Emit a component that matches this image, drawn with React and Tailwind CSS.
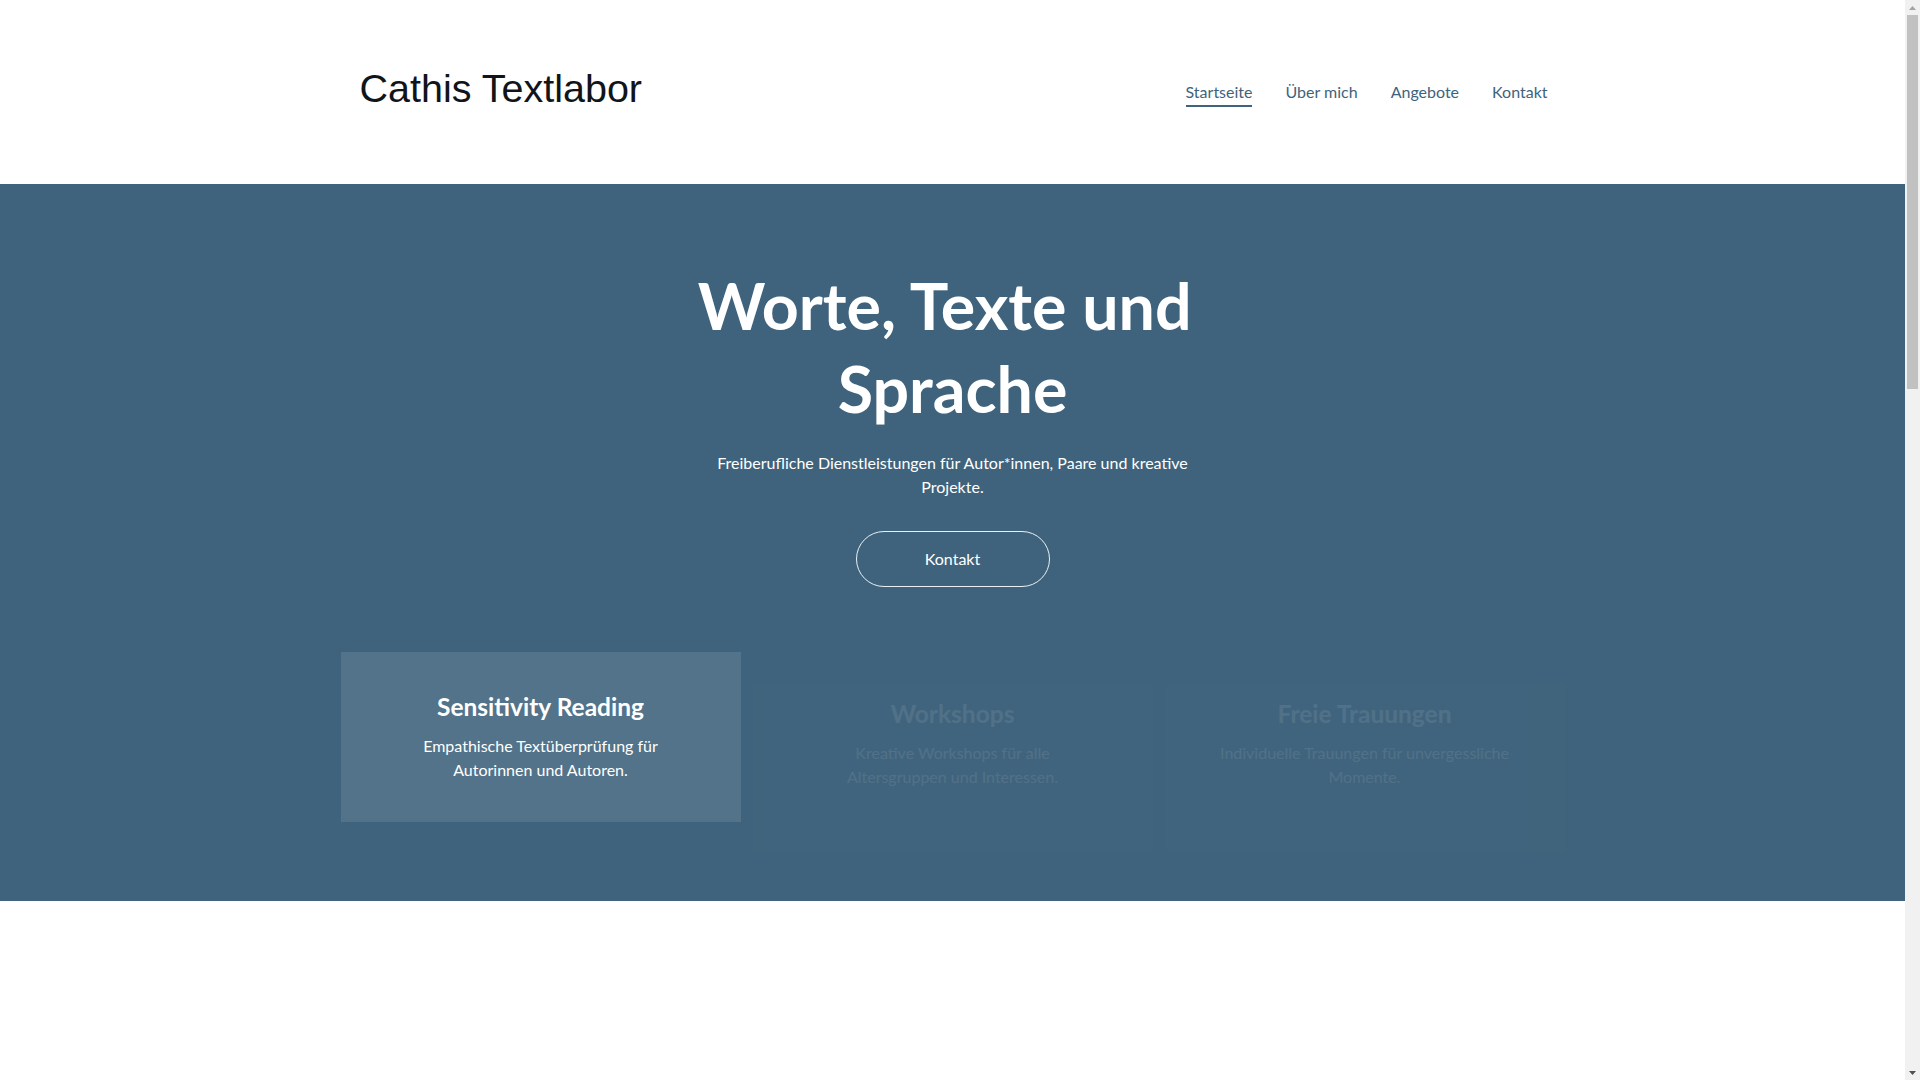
const NAV = ["Startseite", "Über mich", "Angebote", "Kontakt"];

const SERVICES = [
  {
    title: "Sensitivity Reading",
    text: "Empathische Textüberprüfung für Autorinnen und Autoren.",
    state: "shown",
  },
  {
    title: "Workshops",
    text: "Kreative Workshops für alle Altersgruppen und Interessen.",
    state: "entering",
  },
  {
    title: "Freie Trauungen",
    text: "Individuelle Trauungen für unvergessliche Momente.",
    state: "entering",
  },
];

export default function App() {
  return (
    <div className="flex h-screen overflow-hidden bg-white font-['Lato','Noto_Sans',sans-serif]">
      <main className="min-w-0 flex-1">
        <Header />
        <Hero />
        <section className="h-[600px] bg-white" />
      </main>
      <Scrollbar />
    </div>
  );
}

function Header() {
  return (
    <header className="h-[184px] bg-white">
      <div className="mx-auto flex max-w-[1190px] items-start justify-between pt-[66px]">
        <a className="pl-[2px] font-['Liberation_Sans','Arial',sans-serif] text-[39.5px] leading-[1.15] text-[#111418]">
          Cathis Textlabor
        </a>
        <nav className="mt-[14px] flex gap-[33px] text-[16px] leading-6 text-[#3f637c]">
          {NAV.map((item, i) => (
            <a
              key={item}
              className={`border-b-2 pb-[1px] ${i === 0 ? "border-[#3f637c]" : "border-transparent"}`}
            >
              {item}
            </a>
          ))}
        </nav>
      </div>
    </header>
  );
}

function Hero() {
  return (
    <section className="bg-[#3f637c] px-4 pt-20 pb-[79px] text-center text-white">
      <h1 className="mx-auto max-w-[600px] text-[64.5px] font-bold leading-[1.29]">
        Worte, Texte und{"\u00a0"}
        <br />
        Sprache
      </h1>
      <p className="mx-auto mt-[21px] max-w-[500px] text-[16px] leading-6">
        Freiberufliche Dienstleistungen für Autor*innen, Paare und kreative Projekte.
      </p>
      <button className="mt-[32px] h-[56px] w-[194px] rounded-full border border-white/90 text-[16px] text-white">
        Kontakt
      </button>
      <div className="mx-auto mt-[65px] grid max-w-[1224px] grid-cols-3 gap-3">
        {SERVICES.map((s) => (
          <ServiceCard key={s.title} {...s} />
        ))}
      </div>
    </section>
  );
}

function ServiceCard({ title, text, state }) {
  // cards two and three are caught mid fade-in
  const entering = state === "entering";
  return (
    <article
      className={`bg-white/10 px-[54px] pt-10 pb-10 ${entering ? "translate-y-[31px] opacity-[0.09]" : ""}`}
    >
      <div className={entering ? "-translate-y-[24px]" : ""}>
        <h3 className="text-[24.5px] font-bold leading-[1.2]">{title}</h3>
        <p className="mt-3 text-[16px] leading-6">{text}</p>
      </div>
    </article>
  );
}

function Scrollbar() {
  return (
    <aside className="flex w-[15px] shrink-0 flex-col bg-[#f1f1f1]">
      <div className="flex h-[15px] items-center justify-center">
        <svg width="7" height="4" viewBox="0 0 7 4"><path d="M3.5 0L7 4H0z" fill="#a3a3a3" /></svg>
      </div>
      <div className="mx-[2px] h-[374px] bg-[#c1c1c1]" />
      <div className="flex-1" />
      <div className="flex h-[15px] items-center justify-center">
        <svg width="7" height="4" viewBox="0 0 7 4"><path d="M0 0h7L3.5 4z" fill="#505050" /></svg>
      </div>
    </aside>
  );
}
